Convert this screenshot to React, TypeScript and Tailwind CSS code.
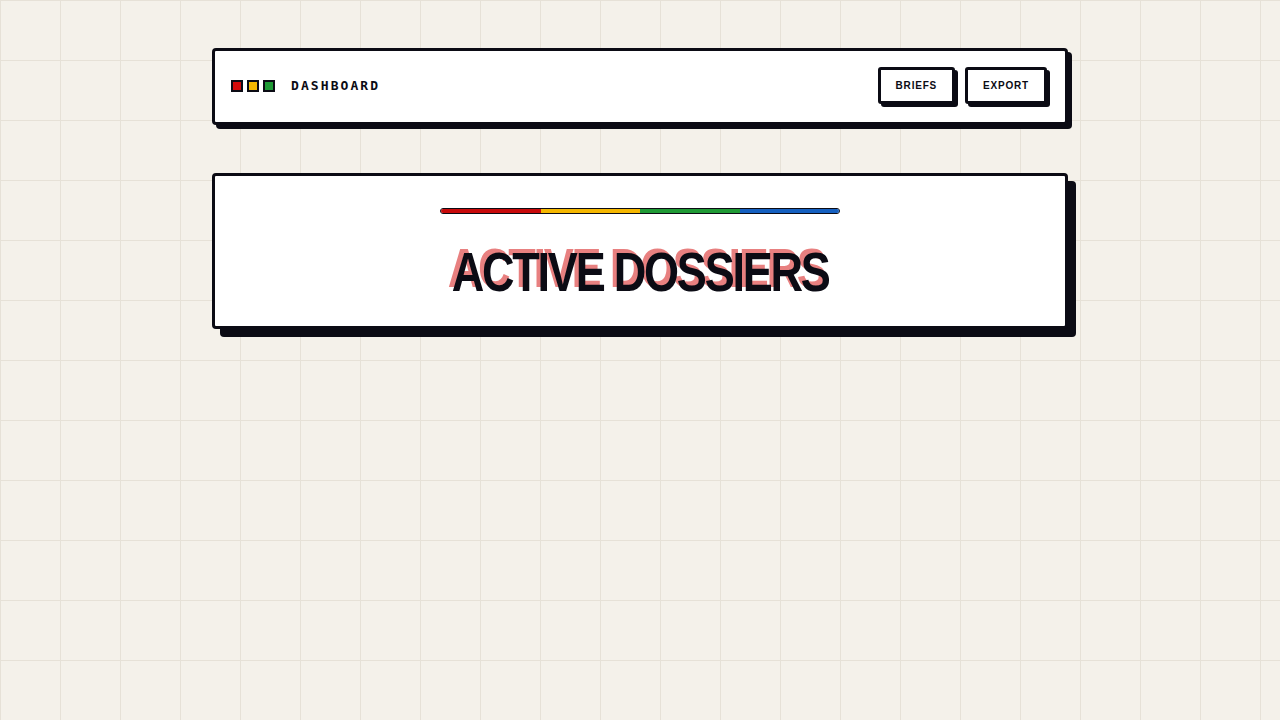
function Dot({ color }: { color: string }) {
  return <span className={`h-3 w-3 border-2 border-[#0b0b14] ${color}`} />;
}

function Btn({ label }: { label: string }) {
  return (
    <button className="h-[37px] rounded-[3px] border-[3px] border-[#0b0b14] bg-white px-[15px] font-['Liberation_Sans',sans-serif] text-[10px] font-bold tracking-[0.08em] text-[#0b0b14] shadow-[3px_3px_0_#0b0b14]">
      {label}
    </button>
  );
}

export default function App() {
  return (
    <div className="min-h-screen bg-[#f4f1ea] bg-[linear-gradient(to_right,#e6e1d7_1px,transparent_1px),linear-gradient(to_bottom,#e6e1d7_1px,transparent_1px)] bg-[size:60px_60px] pt-12">
      <div className="mx-auto flex w-[856px] flex-col gap-12">
        <header className="flex h-[77px] items-center justify-between rounded-[4px] border-[3px] border-[#0b0b14] bg-white pl-4 pr-[18px] shadow-[4px_4px_0_#0b0b14]">
          <div className="flex items-center pb-0.5">
            <div className="flex gap-1">
              <Dot color="bg-[#d10a0a]" />
              <Dot color="bg-[#f5b700]" />
              <Dot color="bg-[#1f9a35]" />
            </div>
            <span className="ml-4 font-['DejaVu_Sans_Mono',monospace] text-[13px] font-bold tracking-[0.16em] text-[#0b0b14]">
              DASHBOARD
            </span>
          </div>
          <div className="flex gap-2.5 pb-0.5">
            <Btn label="BRIEFS" />
            <Btn label="EXPORT" />
          </div>
        </header>

        <section className="flex flex-col items-center rounded-[4px] border-[3px] border-[#0b0b14] bg-white pb-[26px] pt-8 shadow-[8px_8px_0_#0b0b14]">
          <div className="flex h-1.5 w-[400px] overflow-hidden rounded-full border border-[#0b0b14]">
            <span className="flex-1 bg-[#c80a0a]" />
            <span className="flex-1 bg-[#f5b700]" />
            <span className="flex-1 bg-[#1f9a35]" />
            <span className="flex-1 bg-[#1560c0]" />
          </div>
          <h1 className="mt-[30px] inline-block scale-x-[0.805] font-['Liberation_Sans',sans-serif] text-[56px] leading-none font-bold tracking-[-0.05em] whitespace-nowrap text-[#0b0b14] [text-shadow:-5px_-4px_0_rgba(220,60,60,0.65)]">
            ACTIVE DOSSIERS
          </h1>
        </section>
      </div>
    </div>
  );
}
